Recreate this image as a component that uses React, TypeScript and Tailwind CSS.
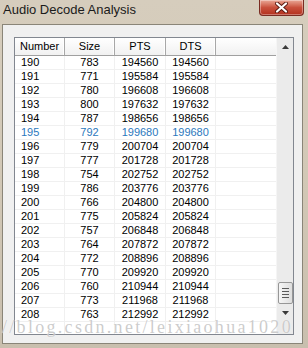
const rows: [number, number, number][] = [
  [190, 783, 194560],
  [191, 771, 195584],
  [192, 780, 196608],
  [193, 800, 197632],
  [194, 787, 198656],
  [195, 792, 199680],
  [196, 779, 200704],
  [197, 777, 201728],
  [198, 754, 202752],
  [199, 786, 203776],
  [200, 766, 204800],
  [201, 775, 205824],
  [202, 757, 206848],
  [203, 764, 207872],
  [204, 772, 208896],
  [205, 770, 209920],
  [206, 760, 210944],
  [207, 773, 211968],
  [208, 763, 212992],
];

const font = { fontFamily: '"Liberation Sans", Tahoma, sans-serif' };

const HeaderCell = ({ label, w }: { label: string; w: string }) => (
  <div
    className={`${w} h-full flex items-center justify-center border-r border-r-[#a8a8a8] shadow-[inset_-1px_0_0_#ffffff]`}
  >
    {label}
  </div>
);

const App = () => {
  return (
    <div
      className="relative w-[308px] h-[348px] overflow-hidden bg-gradient-to-b from-[#d6cdbd] via-[#d2c8b6] to-[#c9bfae] flex flex-col"
      style={font}
    >
      {/* title bar */}
      <div className="h-[24px] flex justify-between shrink-0">
        <span className="pl-[3px] pt-[2px] text-[13px] text-[#1b1b1b] leading-[16px]">
          Audio Decode Analysis
        </span>
        <div className="mr-[4px] w-[45px] h-[16px] rounded-b-[4px] border border-t-0 border-[#7a2c22] bg-gradient-to-b from-[#e9a897] via-[#c9503c] to-[#b2301e] flex items-center justify-center shadow-[inset_0_0_0_1px_rgba(255,255,255,0.35)]">
          <svg width="13" height="11" viewBox="0 0 13 11">
            <path
              d="M2 1.5 L11 9.5 M11 1.5 L2 9.5"
              stroke="#5a1a12"
              strokeWidth="4"
              strokeLinecap="round"
            />
            <path
              d="M2 1.5 L11 9.5 M11 1.5 L2 9.5"
              stroke="#ffffff"
              strokeWidth="2.2"
              strokeLinecap="round"
            />
          </svg>
        </div>
      </div>

      {/* client area */}
      <div className="ml-[2px] mr-[5px] h-[320px] border border-[#8a8578] bg-[#f0f0f0] pl-[11px] pt-[12px]">
        <div className="w-[280px] h-[298px] border border-[#828790] bg-white flex text-[11px] text-black">
          <div className="flex-1 flex flex-col overflow-hidden">
            <div className="h-[18px] flex shrink-0 bg-gradient-to-b from-[#ffffff] to-[#f1f1f1] border-b border-b-[#a0a0a0]">
              <HeaderCell label="Number" w="w-[50px]" />
              <HeaderCell label="Size" w="w-[50px]" />
              <HeaderCell label="PTS" w="w-[51px]" />
              <HeaderCell label="DTS" w="w-[50px]" />
              <div className="flex-1" />
            </div>
            <div className="flex-1 flex flex-col">
              {rows.map(([n, s, p]) => (
                <div
                  key={n}
                  className={`h-[14px] flex items-center border-b border-b-[#f0f0f0] leading-[13px] ${
                    n === 195 ? "text-[#2b78bd]" : "text-black"
                  }`}
                >
                  <div className="w-[50px] pl-[6px] border-r border-r-[#f0f0f0] h-full flex items-center">
                    {n}
                  </div>
                  <div className="w-[50px] border-r border-r-[#f0f0f0] h-full flex items-center justify-center">
                    {s}
                  </div>
                  <div className="w-[51px] border-r border-r-[#f0f0f0] h-full flex items-center justify-center">
                    {p}
                  </div>
                  <div className="w-[50px] border-r border-r-[#f0f0f0] h-full flex items-center justify-center">
                    {p}
                  </div>
                  <div className="flex-1" />
                </div>
              ))}
              <div className="flex-1 flex">
                <div className="w-[50px] border-r border-r-[#f0f0f0]" />
                <div className="w-[50px] border-r border-r-[#f0f0f0]" />
                <div className="w-[51px] border-r border-r-[#f0f0f0]" />
                <div className="w-[50px] border-r border-r-[#f0f0f0]" />
              </div>
            </div>
          </div>

          {/* scrollbar */}
          <div className="w-[17px] bg-[#ebebeb] border-l border-l-[#f5f5f5] flex flex-col items-center">
            <div className="h-[17px] w-full flex items-center justify-center">
              <svg width="7" height="4" viewBox="0 0 7 4">
                <path d="M0 4 L3.5 0 L7 4 Z" fill="#3a3a3a" />
              </svg>
            </div>
            <div className="flex-1" />
            <div className="w-[15px] h-[22px] rounded-[2px] border border-[#979797] bg-gradient-to-r from-[#f6f6f6] to-[#dedede] flex flex-col items-center justify-center gap-[2px]">
              <div className="w-[7px] h-px bg-[#5a5a5a]" />
              <div className="w-[7px] h-px bg-[#5a5a5a]" />
              <div className="w-[7px] h-px bg-[#5a5a5a]" />
              <div className="w-[7px] h-px bg-[#5a5a5a]" />
            </div>
            <div className="h-[17px] w-full flex items-center justify-center">
              <svg width="7" height="4" viewBox="0 0 7 4">
                <path d="M0 0 L7 0 L3.5 4 Z" fill="#3a3a3a" />
              </svg>
            </div>
            <div className="h-[13px]" />
          </div>
        </div>
      </div>

      {/* watermark */}
      <div
        className="absolute left-[2px] top-[322px] text-[18px] leading-[10px] text-[rgba(170,170,170,0.6)] whitespace-nowrap tracking-[2.3px] [text-shadow:0_0_1px_#ffffff]"
        style={{ fontFamily: '"Liberation Serif", serif' }}
      >
        //blog.csdn.net/leixiaohua1020
      </div>
    </div>
  );
};

export default App;
